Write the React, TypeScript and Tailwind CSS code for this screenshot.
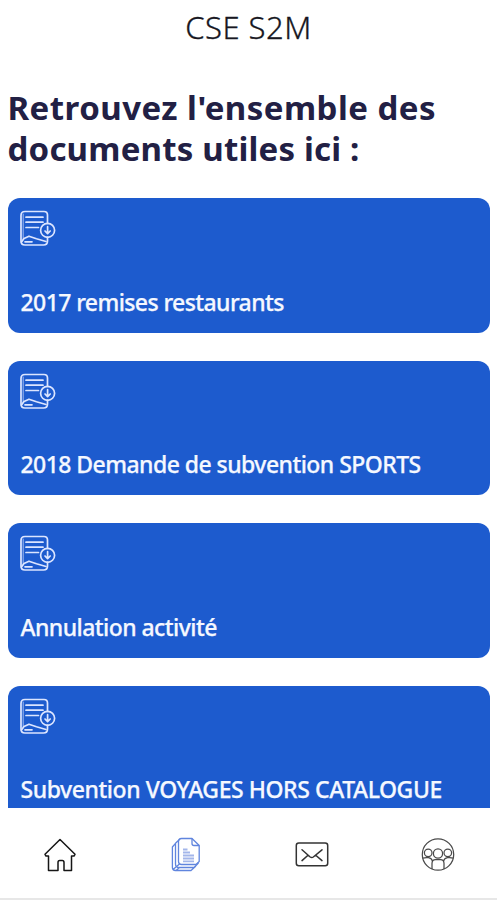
const cards = [
  { label: "2017 remises restaurants", spacing: "tracking-[-0.59px]" },
  { label: "2018 Demande de subvention SPORTS", spacing: "tracking-[-0.55px]" },
  { label: "Annulation activité", spacing: "tracking-[-0.56px]" },
  { label: "Subvention VOYAGES HORS CATALOGUE", spacing: "tracking-[-0.44px]" },
];

function DownloadDoc() {
  return (
    <svg className="block h-9 w-9" viewBox="0 0 36 36" fill="none" stroke="#dce5ff" strokeWidth="1.7" strokeLinecap="round" strokeLinejoin="round">
      <path d="M27.5 13.5V5Q27.5 1.5 24 1.5H5Q1 1.5 1 5.5V31Q1 35 5 35H23.5Q27.5 35 27.5 31V27" />
      <path d="M3.2 4V29.5" strokeWidth="1.2" opacity=".6" />
      <path d="M6 7.2H23M6 12.2H23M6 17.5H18.5" />
      <path d="M1.5 32L4 28.5L9 26.2L16.5 28.8L26 31.5M5 31.8H12" />
      <circle cx="27.6" cy="20.3" r="7" />
      <path d="M27.6 16.7V23.5M25 21L27.6 23.7L30.2 21" />
    </svg>
  );
}

function HomeIcon() {
  return (
    <svg className="h-9 w-9" viewBox="0 0 36 36" fill="none" stroke="#161616" strokeWidth="1.5" strokeLinejoin="round">
      <path d="M18 2.5L33 17.3L32 19H29.5V33.5H22V25.5Q22 23.5 20.3 23.5H17.7Q16 23.5 16 25.5V33.5H6.5V19H4L3 17.3Z" />
    </svg>
  );
}

function DocumentsIcon() {
  return (
    <svg className="h-9 w-9" viewBox="0 0 36 36" fill="none" stroke="#6085de" strokeWidth="1.3" strokeLinejoin="round">
      <path d="M13.5 1.5H24L31.2 8.5V24.5L28 27.5H13.5Q10.5 27.5 10.5 24.5V4.5Q10.5 1.5 13.5 1.5Z" />
      <path d="M24 1.5V6.5Q24 8.5 26 8.5H31.2" />
      <path d="M12 2L7.5 6.3V27Q7.5 30.5 11 30.5H26L30.5 26M7.5 6.3L4.4 10V30.5Q4.4 33.5 7.5 33.5H23L28 29M5 32.5L11.5 27M8 33.5L11.5 30.5" />
      <path d="M15 12.5H19.5M15 15.5H22M15 18.5H26M15 21.5H26M15 24.3H26" stroke="#a3b6ea" strokeWidth="1.8" />
    </svg>
  );
}

function MailIcon() {
  return (
    <svg className="h-9 w-9" viewBox="0 0 36 36" fill="none" stroke="#333" strokeWidth="1.5" strokeLinecap="round" strokeLinejoin="round">
      <rect x="2.3" y="6" width="31.4" height="22.8" rx="2.5" />
      <path d="M8 12.8L16.2 20Q17.8 21.1 19.3 20L28 12.8M8 23.6L14 18.2M28 23.6L21.7 18.2" />
    </svg>
  );
}

function GroupIcon() {
  return (
    <svg className="h-9 w-9" viewBox="0 0 36 36" fill="none" stroke="#4a4a4a" strokeWidth="1.25">
      <circle cx="18" cy="17.5" r="15.7" />
      <circle cx="18" cy="16.5" r="4.6" />
      <circle cx="8.2" cy="15.8" r="3.8" />
      <circle cx="27.8" cy="15.8" r="3.8" />
      <path d="M12 32V26.5Q12 22.5 15.5 22.5H20.5Q24 22.5 24 26.5V32M2.8 21.2Q5.5 20.2 8.5 20.7Q11.7 21.2 12.5 24.2M33.2 21.2Q30.5 20.2 27.5 20.7Q24.3 21.2 23.5 24.2" />
    </svg>
  );
}

export default function App() {
  return (
    <div className="flex h-[900px] w-[497px] flex-col overflow-hidden bg-white font-['Noto_Sans','Open_Sans',sans-serif]">
      <header className="flex h-[58px] shrink-0 justify-center pt-[5px] text-[31px] leading-[44px] font-light text-[#171722]">
        <span className="tracking-[0.45px] [-webkit-text-stroke:0.3px_#171722]">CSE S2M</span>
      </header>
      <main className="flex min-h-0 flex-1 flex-col overflow-hidden px-[7.5px] pt-[29px]">
        <h1 className="h-[111px] shrink-0 text-[33px] leading-[41px] font-bold whitespace-nowrap text-[#222044]">
          <span className="tracking-[0.47px]">Retrouvez l'ensemble des</span>
          <br />
          <span className="tracking-[0.2px]">documents utiles ici :</span>
        </h1>
        <div className="flex flex-col gap-7">
          {cards.map((card) => (
            <article key={card.label} className="flex h-[134.5px] shrink-0 flex-col justify-between rounded-xl bg-[#1d5bce] px-3 pt-3 pb-[15px]">
              <DownloadDoc />
              <h2 className="pl-px text-[23px] leading-8 font-medium whitespace-nowrap text-[#f5f8ff] [-webkit-text-stroke:0.25px_#f5f8ff]">
                <span className={card.spacing}>{card.label}</span>
              </h2>
            </article>
          ))}
        </div>
      </main>
      <nav className="flex h-[92px] shrink-0 items-center justify-between border-b-2 border-[#e7e7e7] pt-[3px] pr-[41px] pl-[42px]">
        <HomeIcon />
        <DocumentsIcon />
        <MailIcon />
        <GroupIcon />
      </nav>
    </div>
  );
}
